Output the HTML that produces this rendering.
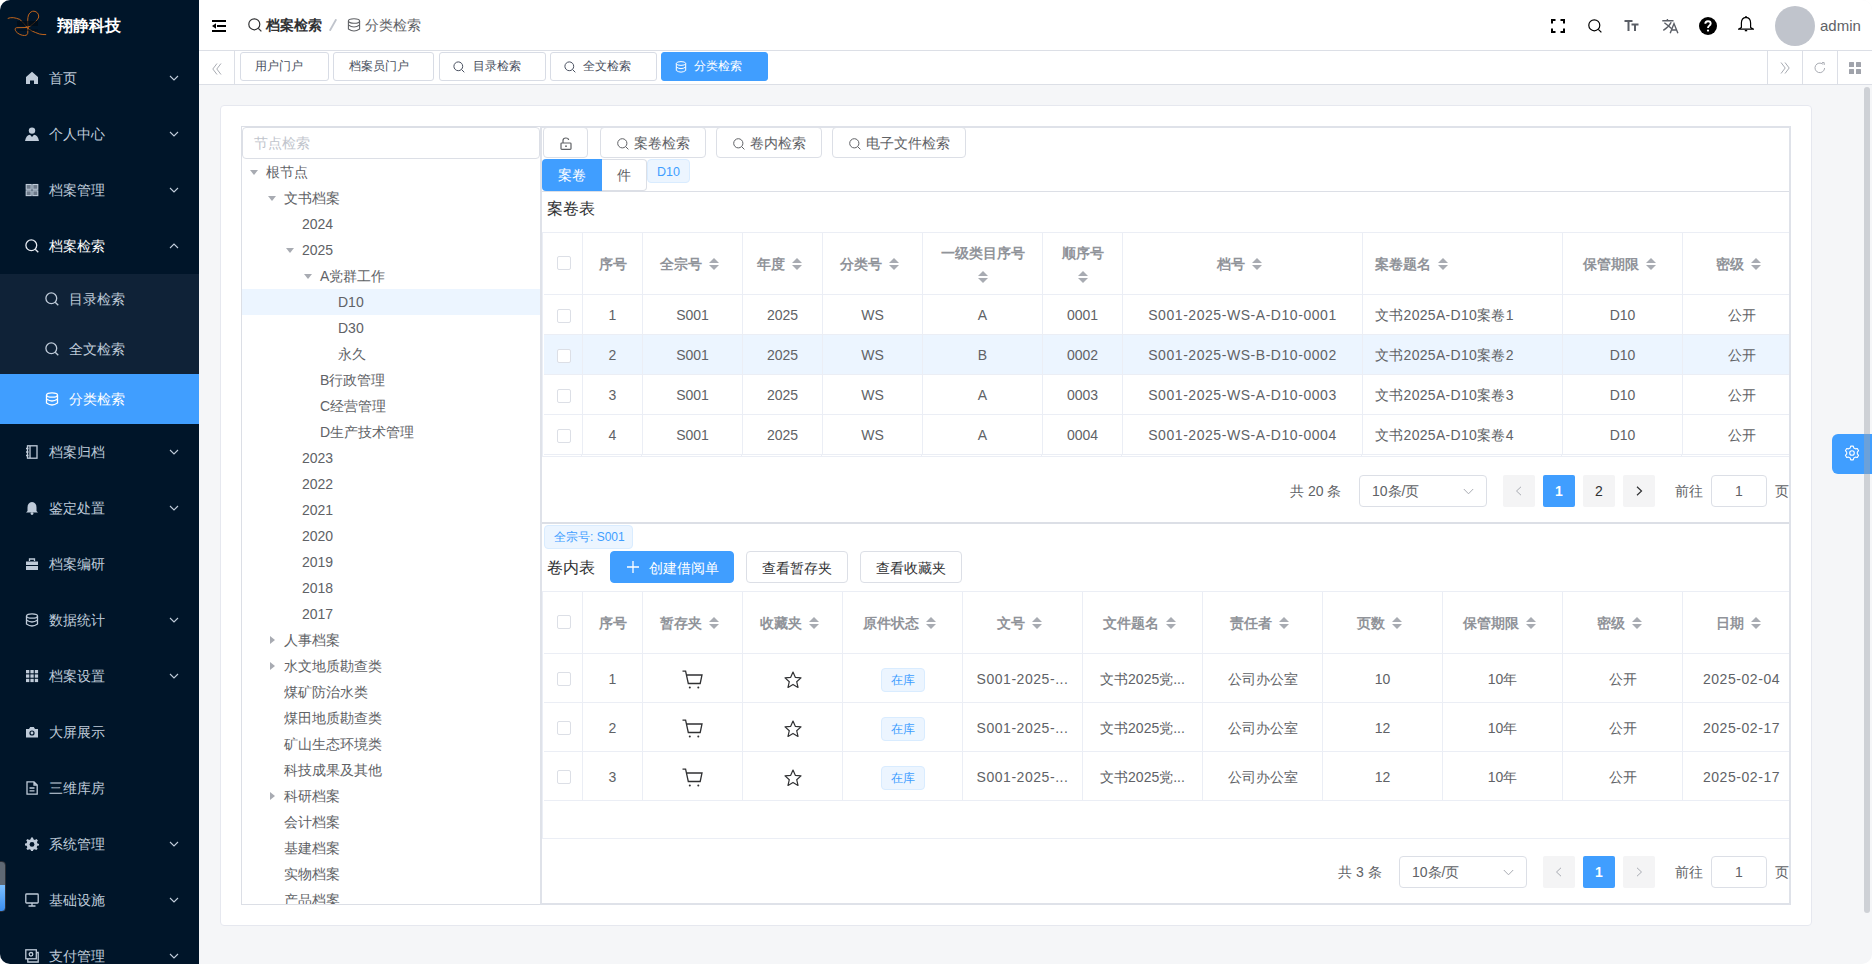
<!DOCTYPE html><html><head><meta charset="utf-8"><style>
*{box-sizing:border-box;margin:0;padding:0}
html,body{width:1872px;height:964px;overflow:hidden;background:#fff;font-family:"Liberation Sans",sans-serif;}
.a{position:absolute}
svg{display:block}
#app{position:absolute;left:0;top:0;width:1872px;height:964px;border-radius:10px;overflow:hidden;background:#f5f6f8}
#side{position:absolute;left:0;top:0;width:199px;height:964px;background:#001529;overflow:hidden}
.logo-t{position:absolute;left:57px;top:14px;font-size:16px;font-weight:bold;color:#fff;line-height:24px}
.mi{position:absolute;left:0;width:199px;height:56px;color:#bfcbd9;font-size:14px;line-height:56px;white-space:nowrap}
.mi .ic{position:absolute;left:25px;top:21px}
.mi .tx{position:absolute;left:49px;top:0}
.mi .ar{position:absolute;left:169px;top:25px}
.sub{position:absolute;left:0;top:274px;width:199px;height:150px;background:#0f2237}
.si{position:absolute;left:0;width:199px;height:50px;color:#bfcbd9;font-size:14px;line-height:50px;white-space:nowrap}
.si .ic{position:absolute;left:45px;top:18px}
.si .tx{position:absolute;left:69px;top:0}
.si.on{background:#409eff;color:#fff}
#hdr{position:absolute;left:199px;top:0;width:1673px;height:50px;background:#fff}
#tags{position:absolute;left:199px;top:50px;width:1673px;height:35px;background:#fff;border-top:1px solid #dcdfe6;border-bottom:1px solid #dcdfe6}
.tag{position:absolute;top:1px;height:29px;border:1px solid #d8dce5;border-radius:3px;background:#fff;color:#495060;font-size:12px;line-height:27px;white-space:nowrap}
.tag.on{background:#409eff;border-color:#409eff;color:#fff}
.tag .ti{position:absolute;top:8px}
.tag .tt{position:absolute;top:0}
.card{position:absolute;left:220px;top:105px;width:1592px;height:821px;background:#fff;border:1px solid #e6e8ef;border-radius:4px}
.tree{position:absolute;left:241px;top:126px;width:300px;height:779px;border:1px solid #dcdfe6;border-top-width:1px;overflow:hidden;background:#fff}
.rp{position:absolute;left:540px;top:126px;width:1251px;height:779px;border:2px solid #dfe2e9;overflow:hidden;background:#fff}
.inp{position:absolute;border:1px solid #dcdfe6;border-radius:4px;background:#fff;font-size:14px;color:#606266;white-space:nowrap}
.tn{position:absolute;left:0;width:298px;height:26px;font-size:14px;line-height:26px;color:#606266;white-space:nowrap}
.tn.on{background:#ecf5ff}
.tn .c{position:absolute;top:11px;width:0;height:0}
.tn .cd{border-left:4px solid transparent;border-right:4px solid transparent;border-top:5px solid #a8abb2}
.tn .cr{border-top:4px solid transparent;border-bottom:4px solid transparent;border-left:5px solid #a8abb2;top:9px}
.btn{position:absolute;height:31px;border:1px solid #dcdfe6;border-radius:4px;background:#fff;color:#606266;font-size:14px;line-height:29px;white-space:nowrap}
.btn.p{background:#409eff;border-color:#409eff;color:#fff}
.btn .bi{position:absolute}
.btn .bt{position:absolute;top:1px}
.tb{position:absolute;overflow:hidden;background:#fff}
.th,.td{position:absolute;border-right:1px solid #ebeef5;border-bottom:1px solid #ebeef5;text-align:center;white-space:nowrap;overflow:hidden}
.th{color:#909399;font-weight:600;font-size:14px}
.td{color:#606266;font-size:14px}
.cb{position:absolute;width:14px;height:14px;border:1px solid #dcdfe6;border-radius:2px;background:#fff}
.sort{display:inline-block;vertical-align:middle;width:24px;height:12px;position:relative;margin-top:-2px}
.sort:before{content:"";position:absolute;left:7px;top:0;border-left:5px solid transparent;border-right:5px solid transparent;border-bottom:5px solid #a8abb2}
.sort:after{content:"";position:absolute;left:7px;top:7px;border-left:5px solid transparent;border-right:5px solid transparent;border-top:5px solid #a8abb2}
.s2:before,.s2:after{left:0 !important}
.pg{position:absolute;font-size:14px;color:#606266;white-space:nowrap}
.pbtn{position:absolute;width:32px;height:32px;background:#f4f4f5;border-radius:2px;color:#303133;font-size:14px;text-align:center;line-height:32px}
.pbtn.on{background:#409eff;color:#fff;font-weight:bold}
.etag{position:absolute;height:24px;background:#ecf5ff;border:1px solid #d9ecff;border-radius:4px;color:#409eff;font-size:12px;line-height:22px;white-space:nowrap}
</style></head><body><div id="app">
<div id="side">
<svg class="a" style="left:0;top:0" width="52" height="42" viewBox="0 0 52 42"><g stroke="#c0641c" fill="none" stroke-width="1" stroke-linecap="round"><path d="M8.1 18.3 C11 17 15 17.5 19.7 19.4 C23 22 25 25 27 27.5 C30 30.5 34 32 39.5 34 C42 34.6 44 34.6 45.8 34.6"/><path d="M28.2 27.5 C27.5 22 27.5 18 28.5 15 C30 12 32 11 34 11.2 C37 11.5 39 14 38.7 17 C38 20 33 24 29.5 26.5 C28 27.3 27 27.5 26 27.5 L16.5 27.7 C14.5 28 15 30 16 31.5 C18 34 21.5 35.5 24.5 35.5 C27 35.5 28 34 27.8 32 L27.8 28.5"/></g><g fill="#000a14" opacity="0.7"><rect x="17" y="21" width="21" height="5"/><rect x="18" y="29.5" width="20" height="1.2"/></g></svg>
<div class="logo-t">翔静科技</div>
<div class="mi" style="top:50px"><svg class="ic" width="14" height="14" viewBox="0 0 14 14"><path d="M7 0.8 L13 6 V13 H9 V9.5 H5 V13 H1 V6 Z" fill="#bfcbd9"/></svg><span class="tx">首页</span><svg class="ar" width="10" height="6" viewBox="0 0 10 6"><path d="M1 1 L5 5 L9 1" stroke="#bfcbd9" fill="none" stroke-width="1.1"/></svg></div>
<div class="mi" style="top:106px"><svg class="ic" width="14" height="14" viewBox="0 0 14 14"><circle cx="7" cy="3.6" r="3.2" fill="#bfcbd9"/><path d="M0 14 Q1 8.2 5 7.8 L7 10 L9 7.8 Q13 8.2 14 14 Z" fill="#bfcbd9"/></svg><span class="tx">个人中心</span><svg class="ar" width="10" height="6" viewBox="0 0 10 6"><path d="M1 1 L5 5 L9 1" stroke="#bfcbd9" fill="none" stroke-width="1.1"/></svg></div>
<div class="mi" style="top:162px"><svg class="ic" width="14" height="14" viewBox="0 0 14 14"><g stroke="#bfcbd9" fill="#6d7a8a" stroke-width="1.1"><rect x="1.2" y="1.5" width="5" height="4.8"/><rect x="7.8" y="1.5" width="5" height="4.8"/><rect x="1.2" y="7.8" width="5" height="4.8"/><rect x="7.8" y="7.8" width="5" height="4.8"/></g></svg><span class="tx">档案管理</span><svg class="ar" width="10" height="6" viewBox="0 0 10 6"><path d="M1 1 L5 5 L9 1" stroke="#bfcbd9" fill="none" stroke-width="1.1"/></svg></div>
<div class="mi" style="top:218px;color:#fff"><svg class="ic" width="14" height="14" viewBox="0 0 14 14"><circle cx="6.3" cy="6.3" r="5.4" stroke="#e6ebf2" fill="none" stroke-width="1.3"/><path d="M10.2 10.2 L13.3 13.3" stroke="#e6ebf2" fill="none" stroke-width="1.3"/></svg><span class="tx">档案检索</span><svg class="ar" width="10" height="6" viewBox="0 0 10 6"><path d="M1 5 L5 1 L9 5" stroke="#bfcbd9" fill="none" stroke-width="1.1"/></svg></div>
<div class="sub">
<div class="si" style="top:0"><svg class="ic" width="14" height="14" viewBox="0 0 14 14"><circle cx="6.3" cy="6.3" r="5.4" stroke="#bfcbd9" fill="none" stroke-width="1.3"/><path d="M10.2 10.2 L13.3 13.3" stroke="#bfcbd9" fill="none" stroke-width="1.3"/></svg><span class="tx">目录检索</span></div>
<div class="si" style="top:50px"><svg class="ic" width="14" height="14" viewBox="0 0 14 14"><circle cx="6.3" cy="6.3" r="5.4" stroke="#bfcbd9" fill="none" stroke-width="1.3"/><path d="M10.2 10.2 L13.3 13.3" stroke="#bfcbd9" fill="none" stroke-width="1.3"/></svg><span class="tx">全文检索</span></div>
<div class="si on" style="top:100px"><svg class="ic" width="14" height="14" viewBox="0 0 14 14"><ellipse cx="7" cy="3" rx="5.5" ry="2.2" stroke="#fff" fill="none" stroke-width="1.3"/><path d="M1.5 3 V11 Q7 15 12.5 11 V3 M1.5 7 Q7 11 12.5 7" stroke="#fff" fill="none" stroke-width="1.3"/></svg><span class="tx">分类检索</span></div>
</div>
<div class="mi" style="top:424px"><svg class="ic" width="14" height="14" viewBox="0 0 14 14"><rect x="2.5" y="0.8" width="9.5" height="12.4" stroke="#bfcbd9" fill="none" stroke-width="1.3"/><path d="M5 0.8 V13.2 M1 3.5 H3.5 M1 7 H3.5 M1 10.5 H3.5" stroke="#bfcbd9" fill="none" stroke-width="1.3"/></svg><span class="tx">档案归档</span><svg class="ar" width="10" height="6" viewBox="0 0 10 6"><path d="M1 1 L5 5 L9 1" stroke="#bfcbd9" fill="none" stroke-width="1.1"/></svg></div>
<div class="mi" style="top:480px"><svg class="ic" width="14" height="14" viewBox="0 0 14 14"><path d="M7 1 Q11.5 1.5 11.5 6.5 V10 L13 11.5 H1 L2.5 10 V6.5 Q2.5 1.5 7 1 Z" fill="#bfcbd9"/><circle cx="7" cy="12.6" r="1.4" fill="#bfcbd9"/></svg><span class="tx">鉴定处置</span><svg class="ar" width="10" height="6" viewBox="0 0 10 6"><path d="M1 1 L5 5 L9 1" stroke="#bfcbd9" fill="none" stroke-width="1.1"/></svg></div>
<div class="mi" style="top:536px"><svg class="ic" width="14" height="14" viewBox="0 0 14 14"><path d="M4.5 4 V2 H9.5 V4" stroke="#bfcbd9" fill="none" stroke-width="1.3"/><rect x="1" y="4.5" width="12" height="8.5" fill="#bfcbd9"/><rect x="1" y="8" width="12" height="1" fill="#001529"/></svg><span class="tx">档案编研</span></div>
<div class="mi" style="top:592px"><svg class="ic" width="14" height="14" viewBox="0 0 14 14"><ellipse cx="7" cy="3" rx="5.5" ry="2.2" stroke="#bfcbd9" fill="none" stroke-width="1.3"/><path d="M1.5 3 V11 Q7 15 12.5 11 V3 M1.5 7 Q7 11 12.5 7" stroke="#bfcbd9" fill="none" stroke-width="1.3"/></svg><span class="tx">数据统计</span><svg class="ar" width="10" height="6" viewBox="0 0 10 6"><path d="M1 1 L5 5 L9 1" stroke="#bfcbd9" fill="none" stroke-width="1.1"/></svg></div>
<div class="mi" style="top:648px"><svg class="ic" width="14" height="14" viewBox="0 0 14 14"><g fill="#bfcbd9"><rect x="1.0" y="1.0" width="3.3" height="3.3"/><rect x="1.0" y="5.4" width="3.3" height="3.3"/><rect x="1.0" y="9.8" width="3.3" height="3.3"/><rect x="5.4" y="1.0" width="3.3" height="3.3"/><rect x="5.4" y="5.4" width="3.3" height="3.3"/><rect x="5.4" y="9.8" width="3.3" height="3.3"/><rect x="9.8" y="1.0" width="3.3" height="3.3"/><rect x="9.8" y="5.4" width="3.3" height="3.3"/><rect x="9.8" y="9.8" width="3.3" height="3.3"/></g></svg><span class="tx">档案设置</span><svg class="ar" width="10" height="6" viewBox="0 0 10 6"><path d="M1 1 L5 5 L9 1" stroke="#bfcbd9" fill="none" stroke-width="1.1"/></svg></div>
<div class="mi" style="top:704px"><svg class="ic" width="14" height="14" viewBox="0 0 14 14"><path d="M1 4 H4 L5.2 2 H8.8 L10 4 H13 V12.5 H1 Z" fill="#bfcbd9"/><circle cx="7" cy="8" r="2.6" fill="#001529"/><circle cx="7" cy="8" r="1.4" fill="#bfcbd9"/></svg><span class="tx">大屏展示</span></div>
<div class="mi" style="top:760px"><svg class="ic" width="14" height="14" viewBox="0 0 14 14"><path d="M2 0.8 H9 L12.2 4 V13.2 H2 Z M9 0.8 V4 H12.2 M4.5 7 H9.5 M4.5 9.8 H9.5" stroke="#bfcbd9" fill="none" stroke-width="1.3"/></svg><span class="tx">三维库房</span></div>
<div class="mi" style="top:816px"><svg class="ic" width="14" height="14" viewBox="0 0 14 14"><path d="M6 0.5 H8 L8.4 2.3 L9.9 3 L11.5 2 L12.9 3.4 L11.9 5 L12.5 6.5 L14 7 V8.4 L12.3 8.8 L11.7 10.3 L12.6 11.8 L11.3 13.1 L9.8 12.2 L8.3 12.8 L8 14 H6 L5.7 12.8 L4.2 12.2 L2.7 13.1 L1.4 11.8 L2.3 10.3 L1.7 8.8 L0 8.4 V6.6 L1.6 6.2 L2.2 4.8 L1.2 3.3 L2.6 1.9 L4.1 2.9 L5.6 2.3 Z" fill="#bfcbd9"/><circle cx="7" cy="7.4" r="2.4" fill="#001529"/></svg><span class="tx">系统管理</span><svg class="ar" width="10" height="6" viewBox="0 0 10 6"><path d="M1 1 L5 5 L9 1" stroke="#bfcbd9" fill="none" stroke-width="1.1"/></svg></div>
<div class="mi" style="top:872px"><svg class="ic" width="14" height="14" viewBox="0 0 14 14"><rect x="0.8" y="1" width="12.4" height="9" rx="0.8" stroke="#bfcbd9" fill="none" stroke-width="1.3"/><path d="M7 10 V12.5 M3.5 13 H10.5" stroke="#bfcbd9" fill="none" stroke-width="1.3"/></svg><span class="tx">基础设施</span><svg class="ar" width="10" height="6" viewBox="0 0 10 6"><path d="M1 1 L5 5 L9 1" stroke="#bfcbd9" fill="none" stroke-width="1.1"/></svg></div>
<div class="mi" style="top:928px"><svg class="ic" width="14" height="14" viewBox="0 0 14 14"><rect x="0.8" y="0.8" width="10.5" height="9" stroke="#bfcbd9" fill="none" stroke-width="1.3"/><path d="M2.8 9.8 V13 H13.2 V3.5 H11.3" stroke="#bfcbd9" fill="none" stroke-width="1.3"/><circle cx="6" cy="5.3" r="1.8" stroke="#bfcbd9" fill="none" stroke-width="1.3"/></svg><span class="tx">支付管理</span><svg class="ar" width="10" height="6" viewBox="0 0 10 6"><path d="M1 1 L5 5 L9 1" stroke="#bfcbd9" fill="none" stroke-width="1.1"/></svg></div>
<div class="a" style="left:-4px;top:861px;width:10px;height:51px;border:1.5px solid #2a2e35;border-radius:4px;background:linear-gradient(#5f6873 0,#5f6873 46%,#7cc0ff 47%,#3a8ef0 100%)"></div>
</div>
<div id="hdr">
<svg class="a" style="left:13px;top:20px" width="14" height="12" viewBox="0 0 14 12"><rect x="0" y="0" width="14" height="2" fill="#000"/><rect x="5" y="5" width="9" height="2" fill="#000"/><rect x="0" y="10" width="14" height="2" fill="#000"/><path d="M0 6 L4 3.2 V8.8 Z" fill="#000"/></svg>
<svg class="a" style="left:49px;top:18px" width="14" height="14" viewBox="0 0 14 14"><circle cx="6.3" cy="6.3" r="5.5" stroke="#303133" fill="none" stroke-width="1.2"/><path d="M10.3 10.3 L13.4 13.4" stroke="#303133" stroke-width="1.2"/></svg>
<div class="a" style="left:67px;top:16px;font-size:14px;line-height:18px;font-weight:bold;color:#303133">档案检索</div>
<svg class="a" style="left:130px;top:19px" width="8" height="12" viewBox="0 0 8 12"><path d="M7.2 0.2 L0.8 11.8" stroke="#c0c4cc" stroke-width="1.8"/></svg>
<svg class="a" style="left:148px;top:18px" width="14" height="14" viewBox="0 0 14 14"><ellipse cx="7" cy="3" rx="5.6" ry="2.3" stroke="#606266" fill="none" stroke-width="1.1"/><path d="M1.4 3 V11 Q7 15 12.6 11 V3 M1.4 7 Q7 11 12.6 7" stroke="#606266" fill="none" stroke-width="1.1"/></svg>
<div class="a" style="left:166px;top:16px;font-size:14px;line-height:18px;color:#606266">分类检索</div>
<svg class="a" style="left:1352px;top:19px" width="14" height="14" viewBox="0 0 14 14"><path d="M1 4.5 V1 H4.5 M9.5 1 H13 V4.5 M13 9.5 V13 H9.5 M4.5 13 H1 V9.5" stroke="#000" fill="none" stroke-width="2"/></svg>
<svg class="a" style="left:1389px;top:19px" width="14" height="14" viewBox="0 0 14 14"><circle cx="6.3" cy="6.3" r="5.5" stroke="#000" fill="none" stroke-width="1.2"/><path d="M10.3 10.3 L13.4 13.4" stroke="#000" stroke-width="1.2"/></svg>
<svg class="a" style="left:1425px;top:20px" width="15" height="11" viewBox="0 0 15 11"><path d="M0.5 1 H8.5 M4.5 1 V11 M7.5 4.5 H14.5 M11 4.5 V11" stroke="#5a5e66" fill="none" stroke-width="2"/></svg>
<svg class="a" style="left:1463px;top:19px" width="17" height="15" viewBox="0 0 17 15"><g stroke="#5a5e66" fill="none" stroke-width="1.4"><path d="M5.4 0 V1.8 M0.3 1.8 H11.5 M2.4 3.8 Q6 6.5 9.8 9.8 M9.2 3.3 Q6.5 8.5 1.3 11.4"/><path d="M8.2 14.2 L12 4.6 L15.9 14.2 M9.4 11 H14.7"/></g></svg>
<svg class="a" style="left:1500px;top:17px" width="18" height="18" viewBox="0 0 18 18"><circle cx="9" cy="9" r="9" fill="#000"/><path d="M6.3 6.8 Q6.3 4.2 9 4.2 Q11.7 4.2 11.7 6.6 Q11.7 8 10 9 Q9 9.6 9 11" stroke="#fff" fill="none" stroke-width="1.9"/><circle cx="9" cy="13.6" r="1.1" fill="#fff"/></svg>
<svg class="a" style="left:1539px;top:16px" width="16" height="16" viewBox="0 0 16 16"><path d="M8 1.3 Q12.6 1.6 12.6 7 V11.5 L15.5 13.2 H0.5 L3.4 11.5 V7 Q3.4 1.6 8 1.3 Z" stroke="#000" fill="none" stroke-width="1.2"/><circle cx="8" cy="1" r="0.9" fill="#000"/><path d="M6.8 14.6 H9.2" stroke="#000" stroke-width="1.4"/></svg>
<div class="a" style="left:1576px;top:6px;width:40px;height:40px;border-radius:50%;background:#c0c4cc"></div>
<div class="a" style="left:1621px;top:16px;font-size:15px;line-height:20px;color:#606266">admin</div>
</div>
<div id="tags">
<div class="a" style="left:35px;top:0;width:1px;height:33px;background:#dcdfe6"></div>
<svg class="a" style="left:13px;top:12px" width="10" height="12" viewBox="0 0 10 12"><path d="M5 0.5 L0.8 6 L5 11.5 M9 0.5 L4.8 6 L9 11.5" stroke="#a8abb2" fill="none" stroke-width="1"/></svg>
<div class="tag" style="left:41px;width:89px"><span class="tt" style="left:14px">用户门户</span></div>
<div class="tag" style="left:134px;width:101px"><span class="tt" style="left:15px">档案员门户</span></div>
<div class="tag" style="left:240px;width:107px"><svg class="ti" style="left:13px" width="12" height="12" viewBox="0 0 12 12"><circle cx="5.3" cy="5.3" r="4.4" stroke="#495060" fill="none" stroke-width="1"/><path d="M8.5 8.5 L11.3 11.3" stroke="#495060" stroke-width="1"/></svg><span class="tt" style="left:33px">目录检索</span></div>
<div class="tag" style="left:351px;width:107px"><svg class="ti" style="left:13px" width="12" height="12" viewBox="0 0 12 12"><circle cx="5.3" cy="5.3" r="4.4" stroke="#495060" fill="none" stroke-width="1"/><path d="M8.5 8.5 L11.3 11.3" stroke="#495060" stroke-width="1"/></svg><span class="tt" style="left:32px">全文检索</span></div>
<div class="tag on" style="left:462px;width:107px"><svg class="ti" style="left:13px" width="12" height="12" viewBox="0 0 12 12"><ellipse cx="6" cy="2.5" rx="4.7" ry="1.9" stroke="#fff" fill="none" stroke-width="1"/><path d="M1.3 2.5 V9.5 Q6 12.8 10.7 9.5 V2.5 M1.3 6 Q6 9.3 10.7 6" stroke="#fff" fill="none" stroke-width="1"/></svg><span class="tt" style="left:32px">分类检索</span></div>
<div class="a" style="left:1568px;top:0;width:1px;height:33px;background:#dcdfe6"></div>
<div class="a" style="left:1603px;top:0;width:1px;height:33px;background:#dcdfe6"></div>
<div class="a" style="left:1638px;top:0;width:1px;height:33px;background:#dcdfe6"></div>
<svg class="a" style="left:1581px;top:11px" width="10" height="12" viewBox="0 0 10 12"><path d="M1 0.5 L5.2 6 L1 11.5 M5 0.5 L9.2 6 L5 11.5" stroke="#a8abb2" fill="none" stroke-width="1"/></svg>
<svg class="a" style="left:1615px;top:11px" width="12" height="12" viewBox="0 0 12 12"><path d="M10.6 6 A4.8 4.8 0 1 1 8.9 2.2" stroke="#a8abb2" fill="none" stroke-width="1"/><path d="M8 0.6 L10.2 0.6 L10.2 3" stroke="#a8abb2" fill="none" stroke-width="1"/></svg>
<svg class="a" style="left:1650px;top:11px" width="12" height="12" viewBox="0 0 12 12"><g fill="#a0a3ab"><rect x="0" y="0" width="5" height="5" rx="0.5"/><rect x="7" y="0" width="5" height="5" rx="0.5"/><rect x="0" y="7" width="5" height="5" rx="0.5"/><rect x="7" y="7" width="5" height="5" rx="0.5"/></g></svg>
</div>
<div class="card"></div>
<div class="tree">
<div class="inp" style="left:0;top:0;width:298px;height:32px;line-height:30px;padding-left:11px;color:#c0c4cc">节点检索</div>
<div class="tn" style="top:32px"><span class="c cd" style="left:8px"></span><span class="a" style="left:24px;top:0">根节点</span></div>
<div class="tn" style="top:58px"><span class="c cd" style="left:26px"></span><span class="a" style="left:42px;top:0">文书档案</span></div>
<div class="tn" style="top:84px"><span class="a" style="left:60px;top:0">2024</span></div>
<div class="tn" style="top:110px"><span class="c cd" style="left:44px"></span><span class="a" style="left:60px;top:0">2025</span></div>
<div class="tn" style="top:136px"><span class="c cd" style="left:62px"></span><span class="a" style="left:78px;top:0">A党群工作</span></div>
<div class="tn on" style="top:162px"><span class="a" style="left:96px;top:0">D10</span></div>
<div class="tn" style="top:188px"><span class="a" style="left:96px;top:0">D30</span></div>
<div class="tn" style="top:214px"><span class="a" style="left:96px;top:0">永久</span></div>
<div class="tn" style="top:240px"><span class="a" style="left:78px;top:0">B行政管理</span></div>
<div class="tn" style="top:266px"><span class="a" style="left:78px;top:0">C经营管理</span></div>
<div class="tn" style="top:292px"><span class="a" style="left:78px;top:0">D生产技术管理</span></div>
<div class="tn" style="top:318px"><span class="a" style="left:60px;top:0">2023</span></div>
<div class="tn" style="top:344px"><span class="a" style="left:60px;top:0">2022</span></div>
<div class="tn" style="top:370px"><span class="a" style="left:60px;top:0">2021</span></div>
<div class="tn" style="top:396px"><span class="a" style="left:60px;top:0">2020</span></div>
<div class="tn" style="top:422px"><span class="a" style="left:60px;top:0">2019</span></div>
<div class="tn" style="top:448px"><span class="a" style="left:60px;top:0">2018</span></div>
<div class="tn" style="top:474px"><span class="a" style="left:60px;top:0">2017</span></div>
<div class="tn" style="top:500px"><span class="c cr" style="left:28px"></span><span class="a" style="left:42px;top:0">人事档案</span></div>
<div class="tn" style="top:526px"><span class="c cr" style="left:28px"></span><span class="a" style="left:42px;top:0">水文地质勘查类</span></div>
<div class="tn" style="top:552px"><span class="a" style="left:42px;top:0">煤矿防治水类</span></div>
<div class="tn" style="top:578px"><span class="a" style="left:42px;top:0">煤田地质勘查类</span></div>
<div class="tn" style="top:604px"><span class="a" style="left:42px;top:0">矿山生态环境类</span></div>
<div class="tn" style="top:630px"><span class="a" style="left:42px;top:0">科技成果及其他</span></div>
<div class="tn" style="top:656px"><span class="c cr" style="left:28px"></span><span class="a" style="left:42px;top:0">科研档案</span></div>
<div class="tn" style="top:682px"><span class="a" style="left:42px;top:0">会计档案</span></div>
<div class="tn" style="top:708px"><span class="a" style="left:42px;top:0">基建档案</span></div>
<div class="tn" style="top:734px"><span class="a" style="left:42px;top:0">实物档案</span></div>
<div class="tn" style="top:760px"><span class="a" style="left:42px;top:0">产品档案</span></div>
</div>
<div class="rp">
<div class="btn" style="left:1px;top:-1px;width:45px"><svg class="bi" style="left:16px;top:9px" width="12" height="13" viewBox="0 0 12 13"><path d="M3 6 V3.5 Q3 1 5.8 1 Q8.6 1 8.6 3" stroke="#606266" fill="none" stroke-width="1.2"/><rect x="1" y="6" width="10" height="6.3" rx="0.8" stroke="#606266" fill="none" stroke-width="1.2"/><circle cx="6" cy="9.2" r="0.9" fill="#606266"/></svg></div>
<div class="btn" style="left:58px;top:-1px;width:106px"><svg class="bi" style="left:16px;top:10px" width="12" height="12" viewBox="0 0 12 12"><circle cx="5.3" cy="5.3" r="4.6" stroke="#606266" fill="none" stroke-width="1"/><path d="M8.6 8.6 L11.4 11.4" stroke="#606266" stroke-width="1"/></svg><span class="bt" style="left:33px">案卷检索</span></div>
<div class="btn" style="left:174px;top:-1px;width:106px"><svg class="bi" style="left:16px;top:10px" width="12" height="12" viewBox="0 0 12 12"><circle cx="5.3" cy="5.3" r="4.6" stroke="#606266" fill="none" stroke-width="1"/><path d="M8.6 8.6 L11.4 11.4" stroke="#606266" stroke-width="1"/></svg><span class="bt" style="left:33px">卷内检索</span></div>
<div class="btn" style="left:290px;top:-1px;width:134px"><svg class="bi" style="left:16px;top:10px" width="12" height="12" viewBox="0 0 12 12"><circle cx="5.3" cy="5.3" r="4.6" stroke="#606266" fill="none" stroke-width="1"/><path d="M8.6 8.6 L11.4 11.4" stroke="#606266" stroke-width="1"/></svg><span class="bt" style="left:33px">电子文件检索</span></div>
<div class="a" style="left:0;top:63px;width:1250px;height:1px;background:#dcdfe6"></div>
<div class="a" style="left:0px;top:31px;width:60px;height:32px;background:#409eff;border-radius:4px 0 0 4px;color:#fff;font-size:14px;line-height:32px;text-align:center">案卷</div>
<div class="a" style="left:60px;top:31px;width:45px;height:32px;background:#fff;border:1px solid #dcdfe6;border-left:0;border-radius:0 4px 4px 0;color:#606266;font-size:14px;line-height:30px;text-align:center">件</div>
<div class="etag" style="left:105px;top:31px;width:43px;text-align:center;line-height:23px;padding-top:1px;font-size:12.5px">D10</div>
<div class="a" style="left:5px;top:70px;font-size:16px;line-height:22px;color:#303133">案卷表</div>
<div class="tb" style="left:0px;top:104px;width:1247px;height:225px">
<div class="a" style="left:0;top:0;width:1300px;height:1px;background:#ebeef5"></div>
<div class="a" style="left:0;top:0;width:1px;height:225px;background:#ebeef5"></div>
<div class="th" style="left:2px;top:0;width:39px;height:63px"><span class="cb" style="left:13px;top:24px"></span></div>
<div class="th" style="left:41px;top:0;width:60px;height:63px;line-height:61px;padding-top:2px;">序号</div>
<div class="th" style="left:101px;top:0;width:100px;height:63px;line-height:61px;padding-top:2px;">全宗号<span class=sort></span></div>
<div class="th" style="left:201px;top:0;width:80px;height:63px;line-height:61px;padding-top:2px;">年度<span class=sort></span></div>
<div class="th" style="left:281px;top:0;width:100px;height:63px;line-height:61px;padding-top:2px;">分类号<span class=sort></span></div>
<div class="th" style="left:381px;top:0;width:120px;height:63px;line-height:23px;padding-top:10px;white-space:normal">一级类目序号<br><span class="sort s2" style="margin:0;width:10px"></span></div>
<div class="th" style="left:501px;top:0;width:80px;height:63px;line-height:23px;padding-top:10px;white-space:normal">顺序号<br><span class="sort s2" style="margin:0;width:10px"></span></div>
<div class="th" style="left:581px;top:0;width:240px;height:63px;line-height:61px;padding-top:2px;">档号<span class=sort></span></div>
<div class="th" style="left:821px;top:0;width:200px;height:63px;line-height:61px;padding-top:2px;text-align:left;padding-left:12px">案卷题名<span class=sort></span></div>
<div class="th" style="left:1021px;top:0;width:120px;height:63px;line-height:61px;padding-top:2px;">保管期限<span class=sort></span></div>
<div class="th" style="left:1141px;top:0;width:118px;height:63px;line-height:61px;padding-top:2px;">密级<span class=sort></span></div>
<div class="td" style="left:2px;top:63px;width:39px;height:40px;"><span class="cb" style="left:13px;top:14px"></span></div>
<div class="td" style="left:41px;top:63px;width:60px;height:40px;line-height:39px;padding-top:1px;">1</div>
<div class="td" style="left:101px;top:63px;width:100px;height:40px;line-height:39px;padding-top:1px;">S001</div>
<div class="td" style="left:201px;top:63px;width:80px;height:40px;line-height:39px;padding-top:1px;">2025</div>
<div class="td" style="left:281px;top:63px;width:100px;height:40px;line-height:39px;padding-top:1px;">WS</div>
<div class="td" style="left:381px;top:63px;width:120px;height:40px;line-height:39px;padding-top:1px;">A</div>
<div class="td" style="left:501px;top:63px;width:80px;height:40px;line-height:39px;padding-top:1px;">0001</div>
<div class="td" style="left:581px;top:63px;width:240px;height:40px;line-height:39px;padding-top:1px;letter-spacing:0.55px;">S001-2025-WS-A-D10-0001</div>
<div class="td" style="left:821px;top:63px;width:200px;height:40px;line-height:39px;padding-top:1px;letter-spacing:0.3px;text-align:left;padding-left:12px">文书2025A-D10案卷1</div>
<div class="td" style="left:1021px;top:63px;width:120px;height:40px;line-height:39px;padding-top:1px;">D10</div>
<div class="td" style="left:1141px;top:63px;width:118px;height:40px;line-height:39px;padding-top:1px;">公开</div>
<div class="td" style="left:2px;top:103px;width:39px;height:40px;background:#ecf5ff;"><span class="cb" style="left:13px;top:14px"></span></div>
<div class="td" style="left:41px;top:103px;width:60px;height:40px;line-height:39px;padding-top:1px;background:#ecf5ff;">2</div>
<div class="td" style="left:101px;top:103px;width:100px;height:40px;line-height:39px;padding-top:1px;background:#ecf5ff;">S001</div>
<div class="td" style="left:201px;top:103px;width:80px;height:40px;line-height:39px;padding-top:1px;background:#ecf5ff;">2025</div>
<div class="td" style="left:281px;top:103px;width:100px;height:40px;line-height:39px;padding-top:1px;background:#ecf5ff;">WS</div>
<div class="td" style="left:381px;top:103px;width:120px;height:40px;line-height:39px;padding-top:1px;background:#ecf5ff;">B</div>
<div class="td" style="left:501px;top:103px;width:80px;height:40px;line-height:39px;padding-top:1px;background:#ecf5ff;">0002</div>
<div class="td" style="left:581px;top:103px;width:240px;height:40px;line-height:39px;padding-top:1px;letter-spacing:0.55px;background:#ecf5ff;">S001-2025-WS-B-D10-0002</div>
<div class="td" style="left:821px;top:103px;width:200px;height:40px;line-height:39px;padding-top:1px;letter-spacing:0.3px;background:#ecf5ff;text-align:left;padding-left:12px">文书2025A-D10案卷2</div>
<div class="td" style="left:1021px;top:103px;width:120px;height:40px;line-height:39px;padding-top:1px;background:#ecf5ff;">D10</div>
<div class="td" style="left:1141px;top:103px;width:118px;height:40px;line-height:39px;padding-top:1px;background:#ecf5ff;">公开</div>
<div class="td" style="left:2px;top:143px;width:39px;height:40px;"><span class="cb" style="left:13px;top:14px"></span></div>
<div class="td" style="left:41px;top:143px;width:60px;height:40px;line-height:39px;padding-top:1px;">3</div>
<div class="td" style="left:101px;top:143px;width:100px;height:40px;line-height:39px;padding-top:1px;">S001</div>
<div class="td" style="left:201px;top:143px;width:80px;height:40px;line-height:39px;padding-top:1px;">2025</div>
<div class="td" style="left:281px;top:143px;width:100px;height:40px;line-height:39px;padding-top:1px;">WS</div>
<div class="td" style="left:381px;top:143px;width:120px;height:40px;line-height:39px;padding-top:1px;">A</div>
<div class="td" style="left:501px;top:143px;width:80px;height:40px;line-height:39px;padding-top:1px;">0003</div>
<div class="td" style="left:581px;top:143px;width:240px;height:40px;line-height:39px;padding-top:1px;letter-spacing:0.55px;">S001-2025-WS-A-D10-0003</div>
<div class="td" style="left:821px;top:143px;width:200px;height:40px;line-height:39px;padding-top:1px;letter-spacing:0.3px;text-align:left;padding-left:12px">文书2025A-D10案卷3</div>
<div class="td" style="left:1021px;top:143px;width:120px;height:40px;line-height:39px;padding-top:1px;">D10</div>
<div class="td" style="left:1141px;top:143px;width:118px;height:40px;line-height:39px;padding-top:1px;">公开</div>
<div class="td" style="left:2px;top:183px;width:39px;height:40px;"><span class="cb" style="left:13px;top:14px"></span></div>
<div class="td" style="left:41px;top:183px;width:60px;height:40px;line-height:39px;padding-top:1px;">4</div>
<div class="td" style="left:101px;top:183px;width:100px;height:40px;line-height:39px;padding-top:1px;">S001</div>
<div class="td" style="left:201px;top:183px;width:80px;height:40px;line-height:39px;padding-top:1px;">2025</div>
<div class="td" style="left:281px;top:183px;width:100px;height:40px;line-height:39px;padding-top:1px;">WS</div>
<div class="td" style="left:381px;top:183px;width:120px;height:40px;line-height:39px;padding-top:1px;">A</div>
<div class="td" style="left:501px;top:183px;width:80px;height:40px;line-height:39px;padding-top:1px;">0004</div>
<div class="td" style="left:581px;top:183px;width:240px;height:40px;line-height:39px;padding-top:1px;letter-spacing:0.55px;">S001-2025-WS-A-D10-0004</div>
<div class="td" style="left:821px;top:183px;width:200px;height:40px;line-height:39px;padding-top:1px;letter-spacing:0.3px;text-align:left;padding-left:12px">文书2025A-D10案卷4</div>
<div class="td" style="left:1021px;top:183px;width:120px;height:40px;line-height:39px;padding-top:1px;">D10</div>
<div class="td" style="left:1141px;top:183px;width:118px;height:40px;line-height:39px;padding-top:1px;">公开</div>
<div class="td" style="left:1px;top:223px;width:39px;height:40px"></div>
<div class="td" style="left:40px;top:223px;width:60px;height:40px"></div>
<div class="td" style="left:100px;top:223px;width:100px;height:40px"></div>
<div class="td" style="left:200px;top:223px;width:80px;height:40px"></div>
<div class="td" style="left:280px;top:223px;width:100px;height:40px"></div>
<div class="td" style="left:380px;top:223px;width:120px;height:40px"></div>
<div class="td" style="left:500px;top:223px;width:80px;height:40px"></div>
<div class="td" style="left:580px;top:223px;width:240px;height:40px"></div>
<div class="td" style="left:820px;top:223px;width:200px;height:40px"></div>
<div class="td" style="left:1020px;top:223px;width:120px;height:40px"></div>
<div class="td" style="left:1140px;top:223px;width:118px;height:40px"></div>
<div class="a" style="left:0;top:224px;width:1250px;height:1px;background:#ebeef5"></div>
</div>
<div class="pg" style="left:748px;top:347px;line-height:32px">共 20 条</div>
<div class="inp" style="left:817px;top:347px;width:128px;height:32px;line-height:30px;padding-left:12px">10条/页<svg class="a" style="left:103px;top:12px" width="11" height="7" viewBox="0 0 11 7"><path d="M0.8 1 L5.5 5.8 L10.2 1" stroke="#a8abb2" fill="none" stroke-width="1"/></svg></div>
<div class="pbtn" style="left:961px;top:347px;color:#c0c4cc"><svg class="a" style="left:12px;top:11px" width="7" height="10" viewBox="0 0 7 10"><path d="M6 0.8 L1.5 5 L6 9.2" stroke="#a8abb2" fill="none" stroke-width="1"/></svg></div>
<div class="pbtn on" style="left:1001px;top:347px">1</div>
<div class="pbtn" style="left:1041px;top:347px">2</div>
<div class="pbtn" style="left:1081px;top:347px"><svg class="a" style="left:13px;top:11px" width="7" height="10" viewBox="0 0 7 10"><path d="M1 0.8 L5.5 5 L1 9.2" stroke="#303133" fill="none" stroke-width="1.2"/></svg></div>
<div class="pg" style="left:1133px;top:347px;line-height:32px">前往</div>
<div class="inp" style="left:1169px;top:347px;width:56px;height:32px;line-height:30px;text-align:center">1</div>
<div class="pg" style="left:1233px;top:347px;line-height:32px">页</div>
<div class="a" style="left:0;top:394px;width:1250px;height:2px;background:#dcdfe6"></div>
<div class="etag" style="left:2px;top:397px;width:89px;padding-left:9px">全宗号: S001</div>
<div class="a" style="left:5px;top:429px;font-size:16px;line-height:22px;color:#303133">卷内表</div>
<div class="btn p" style="left:68px;top:423px;width:124px;height:32px;line-height:30px"><svg class="bi" style="left:16px;top:9px" width="12" height="12" viewBox="0 0 12 12"><path d="M6 0 V12 M0 6 H12" stroke="#fff" stroke-width="1.3"/></svg><span class="bt" style="left:38px">创建借阅单</span></div>
<div class="btn" style="left:204px;top:423px;width:102px;height:32px;line-height:30px;color:#303133"><span class="bt" style="left:15px">查看暂存夹</span></div>
<div class="btn" style="left:318px;top:423px;width:102px;height:32px;line-height:30px;color:#303133"><span class="bt" style="left:15px">查看收藏夹</span></div>
<div class="tb" style="left:0px;top:463px;width:1247px;height:248px">
<div class="a" style="left:0;top:0;width:1300px;height:1px;background:#ebeef5"></div>
<div class="a" style="left:0;top:0;width:1px;height:248px;background:#ebeef5"></div>
<div class="th" style="left:2px;top:0;width:39px;height:63px"><span class="cb" style="left:13px;top:24px"></span></div>
<div class="th" style="left:41px;top:0;width:60px;height:63px;line-height:61px;padding-top:2px;">序号</div>
<div class="th" style="left:101px;top:0;width:100px;height:63px;line-height:61px;padding-top:2px;">暂存夹<span class=sort></span></div>
<div class="th" style="left:201px;top:0;width:100px;height:63px;line-height:61px;padding-top:2px;">收藏夹<span class=sort></span></div>
<div class="th" style="left:301px;top:0;width:120px;height:63px;line-height:61px;padding-top:2px;">原件状态<span class=sort></span></div>
<div class="th" style="left:421px;top:0;width:120px;height:63px;line-height:61px;padding-top:2px;">文号<span class=sort></span></div>
<div class="th" style="left:541px;top:0;width:120px;height:63px;line-height:61px;padding-top:2px;">文件题名<span class=sort></span></div>
<div class="th" style="left:661px;top:0;width:120px;height:63px;line-height:61px;padding-top:2px;">责任者<span class=sort></span></div>
<div class="th" style="left:781px;top:0;width:120px;height:63px;line-height:61px;padding-top:2px;">页数<span class=sort></span></div>
<div class="th" style="left:901px;top:0;width:120px;height:63px;line-height:61px;padding-top:2px;">保管期限<span class=sort></span></div>
<div class="th" style="left:1021px;top:0;width:120px;height:63px;line-height:61px;padding-top:2px;">密级<span class=sort></span></div>
<div class="th" style="left:1141px;top:0;width:118px;height:63px;line-height:61px;padding-top:2px;">日期<span class=sort></span></div>
<div class="td" style="left:2px;top:63px;width:39px;height:49px;"><span class="cb" style="left:13px;top:18px"></span></div>
<div class="td" style="left:41px;top:63px;width:60px;height:49px;line-height:48px;padding-top:1px;">1</div>
<div class="td" style="left:101px;top:63px;width:100px;height:49px;line-height:48px;padding-top:1px;"><svg style="display:inline-block;vertical-align:middle" width="21" height="20" viewBox="0 0 21 20"><path d="M0.5 1.2 H3.6 L6.3 13.5 H18.2 L20 5 H5" stroke="#303133" fill="none" stroke-width="1.3"/><circle cx="7.8" cy="17.6" r="1" fill="#303133"/><circle cx="16.3" cy="17.6" r="1" fill="#303133"/></svg></div>
<div class="td" style="left:201px;top:63px;width:100px;height:49px;line-height:48px;padding-top:1px;"><svg style="display:inline-block;vertical-align:middle" width="18" height="18" viewBox="0 0 18 18"><path d="M9 1 L11.3 6.3 L17 6.9 L12.7 10.7 L14 16.4 L9 13.4 L4 16.4 L5.3 10.7 L1 6.9 L6.7 6.3 Z" stroke="#303133" fill="none" stroke-width="1.2" stroke-linejoin="round"/></svg></div>
<div class="td" style="left:301px;top:63px;width:120px;height:49px;line-height:48px;padding-top:1px;"><span style="display:inline-block;vertical-align:middle;width:44px;height:24px;background:#ecf5ff;border:1px solid #d9ecff;border-radius:4px;color:#409eff;font-size:12px;line-height:22px">在库</span></div>
<div class="td" style="left:421px;top:63px;width:120px;height:49px;line-height:48px;padding-top:1px;letter-spacing:0.55px;">S001-2025-...</div>
<div class="td" style="left:541px;top:63px;width:120px;height:49px;line-height:48px;padding-top:1px;">文书2025党...</div>
<div class="td" style="left:661px;top:63px;width:120px;height:49px;line-height:48px;padding-top:1px;">公司办公室</div>
<div class="td" style="left:781px;top:63px;width:120px;height:49px;line-height:48px;padding-top:1px;">10</div>
<div class="td" style="left:901px;top:63px;width:120px;height:49px;line-height:48px;padding-top:1px;">10年</div>
<div class="td" style="left:1021px;top:63px;width:120px;height:49px;line-height:48px;padding-top:1px;">公开</div>
<div class="td" style="left:1141px;top:63px;width:118px;height:49px;line-height:48px;padding-top:1px;letter-spacing:0.55px;">2025-02-04</div>
<div class="td" style="left:2px;top:112px;width:39px;height:49px;"><span class="cb" style="left:13px;top:18px"></span></div>
<div class="td" style="left:41px;top:112px;width:60px;height:49px;line-height:48px;padding-top:1px;">2</div>
<div class="td" style="left:101px;top:112px;width:100px;height:49px;line-height:48px;padding-top:1px;"><svg style="display:inline-block;vertical-align:middle" width="21" height="20" viewBox="0 0 21 20"><path d="M0.5 1.2 H3.6 L6.3 13.5 H18.2 L20 5 H5" stroke="#303133" fill="none" stroke-width="1.3"/><circle cx="7.8" cy="17.6" r="1" fill="#303133"/><circle cx="16.3" cy="17.6" r="1" fill="#303133"/></svg></div>
<div class="td" style="left:201px;top:112px;width:100px;height:49px;line-height:48px;padding-top:1px;"><svg style="display:inline-block;vertical-align:middle" width="18" height="18" viewBox="0 0 18 18"><path d="M9 1 L11.3 6.3 L17 6.9 L12.7 10.7 L14 16.4 L9 13.4 L4 16.4 L5.3 10.7 L1 6.9 L6.7 6.3 Z" stroke="#303133" fill="none" stroke-width="1.2" stroke-linejoin="round"/></svg></div>
<div class="td" style="left:301px;top:112px;width:120px;height:49px;line-height:48px;padding-top:1px;"><span style="display:inline-block;vertical-align:middle;width:44px;height:24px;background:#ecf5ff;border:1px solid #d9ecff;border-radius:4px;color:#409eff;font-size:12px;line-height:22px">在库</span></div>
<div class="td" style="left:421px;top:112px;width:120px;height:49px;line-height:48px;padding-top:1px;letter-spacing:0.55px;">S001-2025-...</div>
<div class="td" style="left:541px;top:112px;width:120px;height:49px;line-height:48px;padding-top:1px;">文书2025党...</div>
<div class="td" style="left:661px;top:112px;width:120px;height:49px;line-height:48px;padding-top:1px;">公司办公室</div>
<div class="td" style="left:781px;top:112px;width:120px;height:49px;line-height:48px;padding-top:1px;">12</div>
<div class="td" style="left:901px;top:112px;width:120px;height:49px;line-height:48px;padding-top:1px;">10年</div>
<div class="td" style="left:1021px;top:112px;width:120px;height:49px;line-height:48px;padding-top:1px;">公开</div>
<div class="td" style="left:1141px;top:112px;width:118px;height:49px;line-height:48px;padding-top:1px;letter-spacing:0.55px;">2025-02-17</div>
<div class="td" style="left:2px;top:161px;width:39px;height:49px;"><span class="cb" style="left:13px;top:18px"></span></div>
<div class="td" style="left:41px;top:161px;width:60px;height:49px;line-height:48px;padding-top:1px;">3</div>
<div class="td" style="left:101px;top:161px;width:100px;height:49px;line-height:48px;padding-top:1px;"><svg style="display:inline-block;vertical-align:middle" width="21" height="20" viewBox="0 0 21 20"><path d="M0.5 1.2 H3.6 L6.3 13.5 H18.2 L20 5 H5" stroke="#303133" fill="none" stroke-width="1.3"/><circle cx="7.8" cy="17.6" r="1" fill="#303133"/><circle cx="16.3" cy="17.6" r="1" fill="#303133"/></svg></div>
<div class="td" style="left:201px;top:161px;width:100px;height:49px;line-height:48px;padding-top:1px;"><svg style="display:inline-block;vertical-align:middle" width="18" height="18" viewBox="0 0 18 18"><path d="M9 1 L11.3 6.3 L17 6.9 L12.7 10.7 L14 16.4 L9 13.4 L4 16.4 L5.3 10.7 L1 6.9 L6.7 6.3 Z" stroke="#303133" fill="none" stroke-width="1.2" stroke-linejoin="round"/></svg></div>
<div class="td" style="left:301px;top:161px;width:120px;height:49px;line-height:48px;padding-top:1px;"><span style="display:inline-block;vertical-align:middle;width:44px;height:24px;background:#ecf5ff;border:1px solid #d9ecff;border-radius:4px;color:#409eff;font-size:12px;line-height:22px">在库</span></div>
<div class="td" style="left:421px;top:161px;width:120px;height:49px;line-height:48px;padding-top:1px;letter-spacing:0.55px;">S001-2025-...</div>
<div class="td" style="left:541px;top:161px;width:120px;height:49px;line-height:48px;padding-top:1px;">文书2025党...</div>
<div class="td" style="left:661px;top:161px;width:120px;height:49px;line-height:48px;padding-top:1px;">公司办公室</div>
<div class="td" style="left:781px;top:161px;width:120px;height:49px;line-height:48px;padding-top:1px;">12</div>
<div class="td" style="left:901px;top:161px;width:120px;height:49px;line-height:48px;padding-top:1px;">10年</div>
<div class="td" style="left:1021px;top:161px;width:120px;height:49px;line-height:48px;padding-top:1px;">公开</div>
<div class="td" style="left:1141px;top:161px;width:118px;height:49px;line-height:48px;padding-top:1px;letter-spacing:0.55px;">2025-02-17</div>
<div class="a" style="left:0;top:247px;width:1250px;height:1px;background:#ebeef5"></div>
</div>
<div class="pg" style="left:796px;top:728px;line-height:32px">共 3 条</div>
<div class="inp" style="left:857px;top:728px;width:128px;height:32px;line-height:30px;padding-left:12px">10条/页<svg class="a" style="left:103px;top:12px" width="11" height="7" viewBox="0 0 11 7"><path d="M0.8 1 L5.5 5.8 L10.2 1" stroke="#a8abb2" fill="none" stroke-width="1"/></svg></div>
<div class="pbtn" style="left:1001px;top:728px;color:#c0c4cc"><svg class="a" style="left:12px;top:11px" width="7" height="10" viewBox="0 0 7 10"><path d="M6 0.8 L1.5 5 L6 9.2" stroke="#a8abb2" fill="none" stroke-width="1"/></svg></div>
<div class="pbtn on" style="left:1041px;top:728px">1</div>
<div class="pbtn" style="left:1081px;top:728px"><svg class="a" style="left:13px;top:11px" width="7" height="10" viewBox="0 0 7 10"><path d="M1 0.8 L5.5 5 L1 9.2" stroke="#a8abb2" fill="none" stroke-width="1"/></svg></div>
<div class="pg" style="left:1133px;top:728px;line-height:32px">前往</div>
<div class="inp" style="left:1169px;top:728px;width:56px;height:32px;line-height:30px;text-align:center">1</div>
<div class="pg" style="left:1233px;top:728px;line-height:32px">页</div>
</div>
<div class="a" style="left:1832px;top:434px;width:50px;height:40px;background:#409eff;border-radius:6px"><svg class="a" style="left:12px;top:11px" width="16" height="16" viewBox="0 0 16 16"><path d="M6.20 2.91 L6.72 1.12 L9.28 1.12 L9.80 2.91 L11.51 3.89 L13.32 3.45 L14.60 5.66 L13.31 7.02 L13.31 8.98 L14.60 10.34 L13.32 12.55 L11.51 12.11 L9.80 13.09 L9.28 14.88 L6.72 14.88 L6.20 13.09 L4.49 12.11 L2.68 12.55 L1.40 10.34 L2.69 8.98 L2.69 7.02 L1.40 5.66 L2.68 3.45 L4.49 3.89 Z" stroke="#fff" fill="none" stroke-width="1.1" stroke-linejoin="round"/><circle cx="8" cy="8" r="2.3" stroke="#fff" fill="none" stroke-width="1.1"/></svg></div>
<div class="a" style="left:1864px;top:87px;width:6px;height:826px;border-radius:3px;background:rgba(160,164,172,0.45)"></div>
</div></body></html>
